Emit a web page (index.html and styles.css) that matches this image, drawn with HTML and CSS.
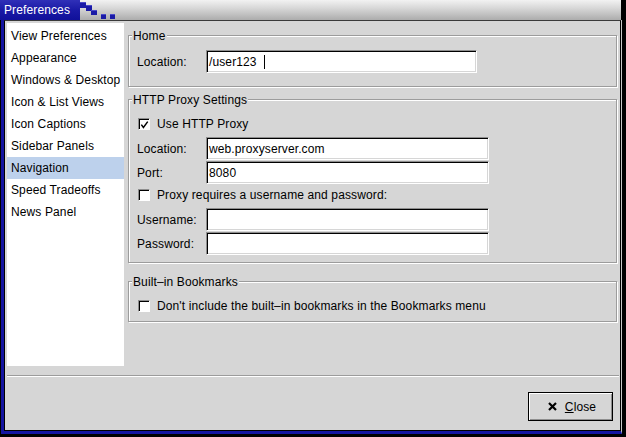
FILE: index.html
```html
<!DOCTYPE html>
<html>
<head>
<meta charset="utf-8">
<link rel="stylesheet" href="styles.css">
</head>
<body>
<div class="window">
  <div class="titlebar">
    <div class="title-tab">Preferences</div>
    <svg class="steps" width="40" height="20" viewBox="0 0 40 20">
      <rect x="0" y="2" width="6" height="6" fill="#1a1aa6"/>
      <rect x="0" y="2" width="6" height="1" fill="#4a4ac8"/>
      <rect x="6" y="5" width="6" height="6" fill="#1a1aa6"/>
      <rect x="6" y="5" width="6" height="1" fill="#4a4ac8"/>
      <rect x="11" y="10" width="6" height="5" fill="#1a1aa6"/>
      <rect x="11" y="10" width="6" height="1" fill="#4a4ac8"/>
      <rect x="21" y="14" width="5" height="5" fill="#1a1aa6"/>
      <rect x="21" y="14" width="5" height="1" fill="#4a4ac8"/>
      <rect x="30" y="14" width="5" height="5" fill="#1a1aa6"/>
      <rect x="30" y="14" width="5" height="1" fill="#4a4ac8"/>
    </svg>
  </div>
  <div class="frame">
    <div class="body">
      <div class="content">
        <ul class="sidebar">
          <li>View Preferences</li>
          <li>Appearance</li>
          <li>Windows &amp; Desktop</li>
          <li>Icon &amp; List Views</li>
          <li>Icon Captions</li>
          <li>Sidebar Panels</li>
          <li class="active">Navigation</li>
          <li>Speed Tradeoffs</li>
          <li>News Panel</li>
        </ul>
        <div class="panel">
          <div class="group group-home">
            <div class="group-label">Home</div>
            <div class="fieldrow">
              <span class="lbl">Location:</span>
              <div class="field field-short">/user123<span class="caret"></span></div>
            </div>
          </div>
          <div class="group group-http">
            <div class="group-label">HTTP Proxy Settings</div>
            <div class="checkrow">
              <span class="check"><svg width="10" height="10" viewBox="0 0 10 10"><polyline points="1.5,4.5 3.8,7.8 8.6,1.2" fill="none" stroke="#000" stroke-width="1.6"/></svg></span>
              <span>Use HTTP Proxy</span>
            </div>
            <div class="fieldrow">
              <span class="lbl">Location:</span>
              <div class="field">web.proxyserver.com</div>
            </div>
            <div class="fieldrow">
              <span class="lbl">Port:</span>
              <div class="field">8080</div>
            </div>
            <div class="checkrow">
              <span class="check"></span>
              <span>Proxy requires a username and password:</span>
            </div>
            <div class="fieldrow">
              <span class="lbl">Username:</span>
              <div class="field"></div>
            </div>
            <div class="fieldrow">
              <span class="lbl">Password:</span>
              <div class="field"></div>
            </div>
          </div>
          <div class="group group-bm">
            <div class="group-label">Built–in Bookmarks</div>
            <div class="checkrow">
              <span class="check"></span>
              <span>Don't include the built–in bookmarks in the Bookmarks menu</span>
            </div>
          </div>
        </div>
      </div>
      <div class="separator"></div>
      <div class="buttons">
        <button class="close">
          <svg class="xicon" width="9" height="9" viewBox="0 0 9 9"><path d="M1 1L8 8M8 1L1 8" stroke="#000" stroke-width="2.2" fill="none"/></svg>
          <span><u>C</u>lose</span>
        </button>
      </div>
    </div>
  </div>
</div>
</body>
</html>
```

FILE: styles.css
```css
* {
  box-sizing: border-box;
}

body {
  margin: 0;
  font-family: "Liberation Sans", Arial, sans-serif;
  font-size: 12px;
  letter-spacing: 0.12px;
  color: #000;
}

.window {
  width: 626px;
  height: 437px;
  display: flex;
  flex-direction: column;
  background: #000;
  overflow: hidden;
}

.titlebar {
  height: 20px;
  flex: none;
  display: flex;
  margin-right: 5px;
  background: linear-gradient(#f2f2f2, #d8d8d8 40%, #acacac);
}

.title-tab {
  width: 80px;
  flex: none;
  padding-left: 4px;
  line-height: 20px;
  color: #fff;
  background: linear-gradient(#3030b8, #1a1aa6 50%, #10109a);
}

.steps {
  flex: none;
  display: block;
}

.frame {
  flex: 1;
  display: flex;
  margin: 0 4px 3px 1px;
  border-left: 3px solid #1414a0;
  border-bottom: 3px solid #1414a0;
  border-right: 1px solid #c8c8c8;
}

.body {
  flex: 1;
  display: flex;
  flex-direction: column;
  background: #d6d6d6;
  border: 1px solid #000;
  border-top-color: #3a3a3a;
}

.content {
  display: flex;
  height: 345px;
  padding: 2px 0 0 2px;
}

.sidebar {
  width: 117px;
  margin: 0;
  padding: 2px 0 0 0;
  list-style: none;
  background: #fff;
}

.sidebar li {
  height: 22px;
  line-height: 22px;
  padding-left: 4px;
  white-space: nowrap;
}

.sidebar li.active {
  background: #bdd1ec;
}

.panel {
  width: 491px;
  margin-left: 4px;
  padding-top: 12px;
  display: flex;
  flex-direction: column;
}

.group {
  position: relative;
  width: 489px;
  border: 1px solid #9c9c9c;
  box-shadow: inset 1px 1px 0 #fff, 1px 1px 0 #fff;
  padding-left: 8px;
}

.group-home {
  padding-top: 14px;
  padding-bottom: 13px;
  margin-bottom: 12px;
}

.group-http {
  padding-top: 16px;
  padding-bottom: 7px;
  margin-bottom: 18px;
}

.group-bm {
  padding-top: 16px;
  padding-bottom: 7px;
}

.group-label {
  position: absolute;
  left: 3px;
  top: -7px;
  padding: 0 1px;
  line-height: 14px;
  background: #d6d6d6;
  white-space: nowrap;
}

.fieldrow {
  height: 23px;
  display: flex;
  align-items: center;
}

.checkrow {
  height: 16px;
  display: flex;
  align-items: center;
  white-space: nowrap;
}

.checkrow + .fieldrow {
  margin-top: 5px;
}

.fieldrow + .fieldrow {
  margin-top: 1px;
}

.fieldrow + .checkrow {
  margin-top: 3px;
}

.lbl {
  width: 69px;
  flex: none;
}

.field {
  width: 283px;
  height: 23px;
  display: flex;
  align-items: center;
  padding-left: 2px;
  background: #fff;
  border: 1px solid;
  border-color: #8e8e8e #fff #fff #8e8e8e;
  box-shadow: inset 1px 1px 0 #000, inset -1px -1px 0 #d6d6d6;
  white-space: nowrap;
}

.field-short {
  width: 271px;
}

.caret {
  display: inline-block;
  width: 1px;
  height: 14px;
  margin-left: 7px;
  background: #000;
}

.check {
  width: 12px;
  height: 12px;
  flex: none;
  display: flex;
  align-items: center;
  justify-content: center;
  margin-left: 1px;
  margin-right: 7px;
  background: #fff;
  border: 1px solid;
  border-color: #8e8e8e #fff #fff #8e8e8e;
  box-shadow: inset 1px 1px 0 #000;
}

.check svg {
  display: block;
  margin: 1px 0 0 1px;
}

.separator {
  height: 2px;
  margin: 9px 1px 0 2px;
  border-top: 1px solid #9c9c9c;
  border-bottom: 1px solid #fff;
}

.buttons {
  display: flex;
  justify-content: flex-end;
  padding: 15px 7px 0 0;
}

.close {
  width: 85px;
  height: 29px;
  display: flex;
  align-items: center;
  justify-content: center;
  gap: 8px;
  padding: 0 0 0 3px;
  font: inherit;
  letter-spacing: inherit;
  color: #000;
  background: #d6d6d6;
  border: 1px solid #000;
  border-radius: 0;
  box-shadow: inset 1px 1px 0 #fff, inset -1px -1px 0 #8e8e8e;
}

.xicon {
  display: block;
}
```
